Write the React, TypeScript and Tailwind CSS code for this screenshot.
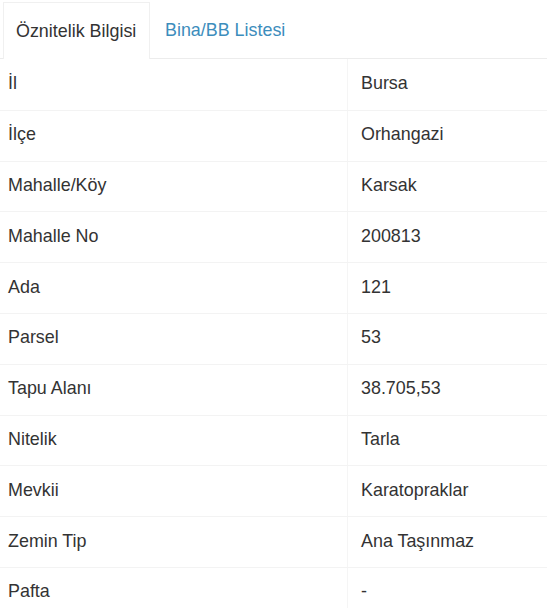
import React from 'react';

const rows: [string, string][] = [
  ['İl', 'Bursa'],
  ['İlçe', 'Orhangazi'],
  ['Mahalle/Köy', 'Karsak'],
  ['Mahalle No', '200813'],
  ['Ada', '121'],
  ['Parsel', '53'],
  ['Tapu Alanı', '38.705,53'],
  ['Nitelik', 'Tarla'],
  ['Mevkii', 'Karatopraklar'],
  ['Zemin Tip', 'Ana Taşınmaz'],
  ['Pafta', '-'],
];

const App: React.FC = () => {
  return (
    <div className="w-[547px] h-[608px] overflow-hidden bg-white text-[#333] text-[17.9px] font-['Liberation_Sans',Arial,sans-serif]">
      {/* tabs */}
      <div className="flex h-[59px] pl-[3px] pt-[2px] border-b border-[#ececec]">
        <div className="w-[147px] h-[57px] -mb-px flex items-center pl-[12px] border border-b-0 border-[#f0f0f0] bg-white">
          Öznitelik Bilgisi
        </div>
        <div className="flex items-center pl-[15px] text-[#3c8dbc]">Bina/BB Listesi</div>
      </div>

      {/* attributes */}
      <div className="flex flex-col">
        {rows.map(([label, value], i) => (
          <div
            key={label}
            className={`grid grid-cols-[348px_1fr] h-[50.8px] ${i > 0 ? 'border-t border-[#f3f3f3]' : ''}`}
          >
            <div className="flex items-center pl-[8px] pb-[2px] border-r border-[#f5f5f5]">{label}</div>
            <div className="flex items-center pl-[13px] pb-[2px]">{value}</div>
          </div>
        ))}
      </div>
    </div>
  );
};

export default App;
